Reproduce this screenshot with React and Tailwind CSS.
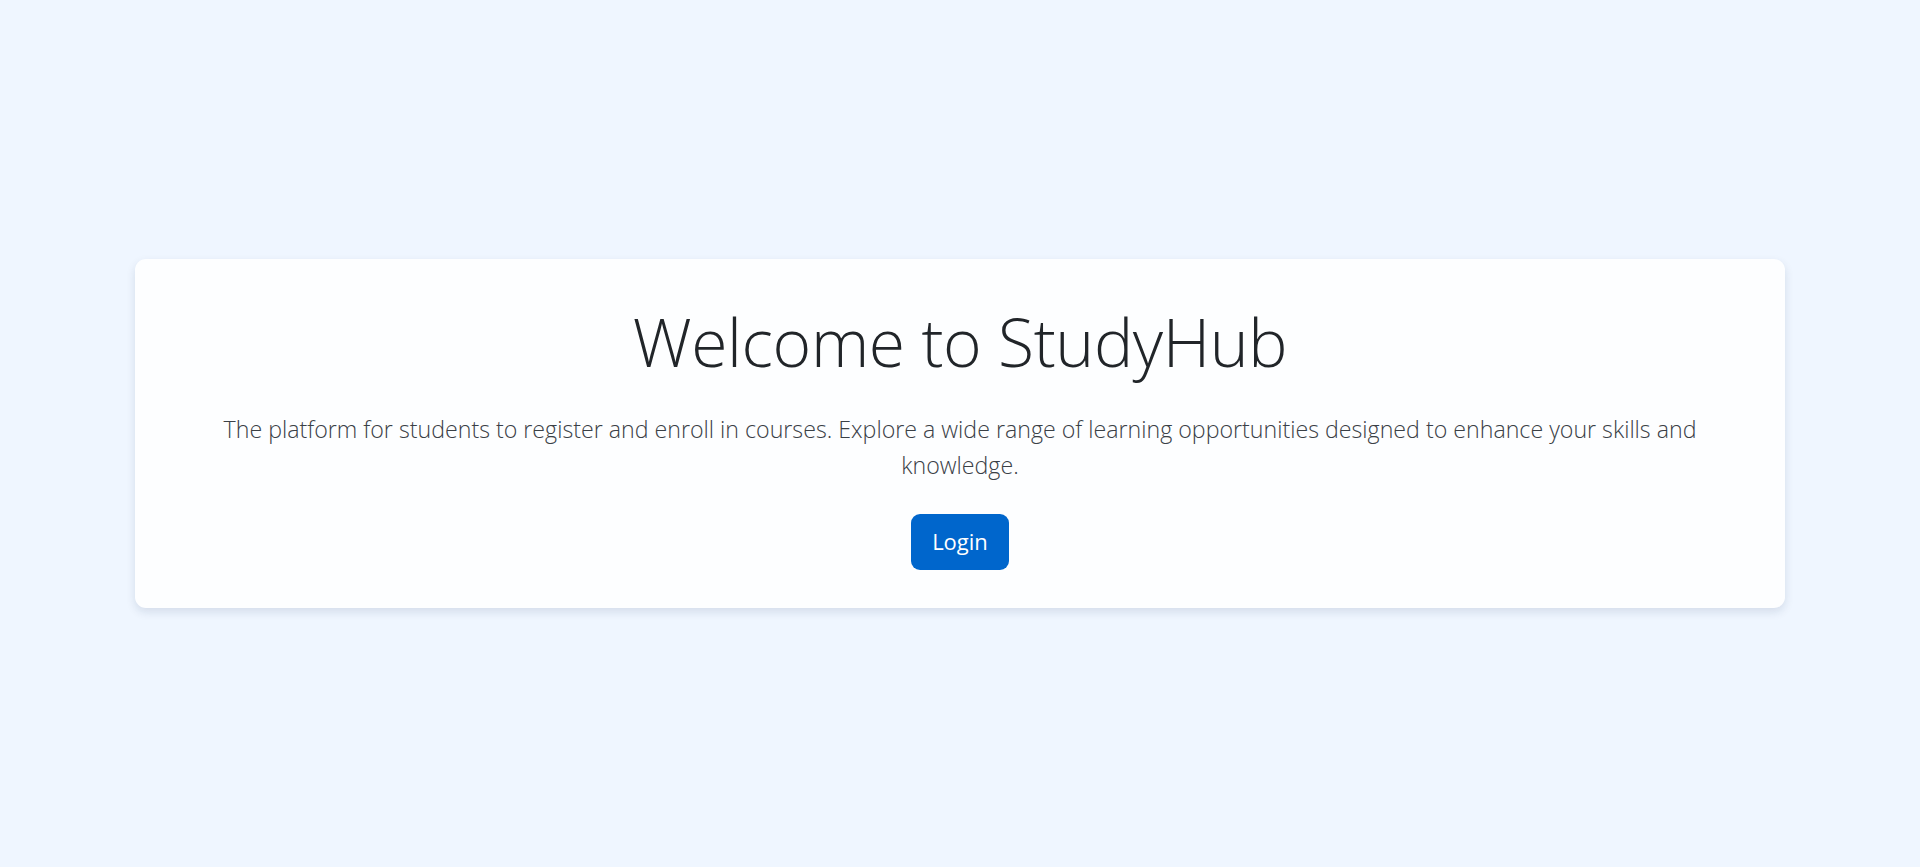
export default function App() {
    return (
        <div className="min-h-screen flex items-center bg-[#eff6ff] px-[135px] font-['Open_Sans','Noto_Sans',sans-serif]">
            <div className="w-full bg-[#fdfeff] rounded-[11px] shadow-[0_4px_10px_rgba(15,40,80,0.12)] pt-[43px] pb-[38px] px-8 text-center">
                <h1 className="text-[66px] leading-[1.2] font-light text-[#212529] tracking-[-0.4px]">
                    Welcome to StudyHub
                </h1>
                <p className="mt-[29px] text-[23.2px] leading-[36px] font-light text-[#3a4046] max-w-[1520px] mx-auto">
                    The platform for students to register and enroll in courses. Explore a wide range of learning opportunities designed to enhance your skills and knowledge.
                </p>
                <button className="mt-[31px] h-[56px] px-[21px] rounded-[9px] bg-[#0066cc] text-white text-[22px] font-normal">
                    Login
                </button>
            </div>
        </div>
    );
}
